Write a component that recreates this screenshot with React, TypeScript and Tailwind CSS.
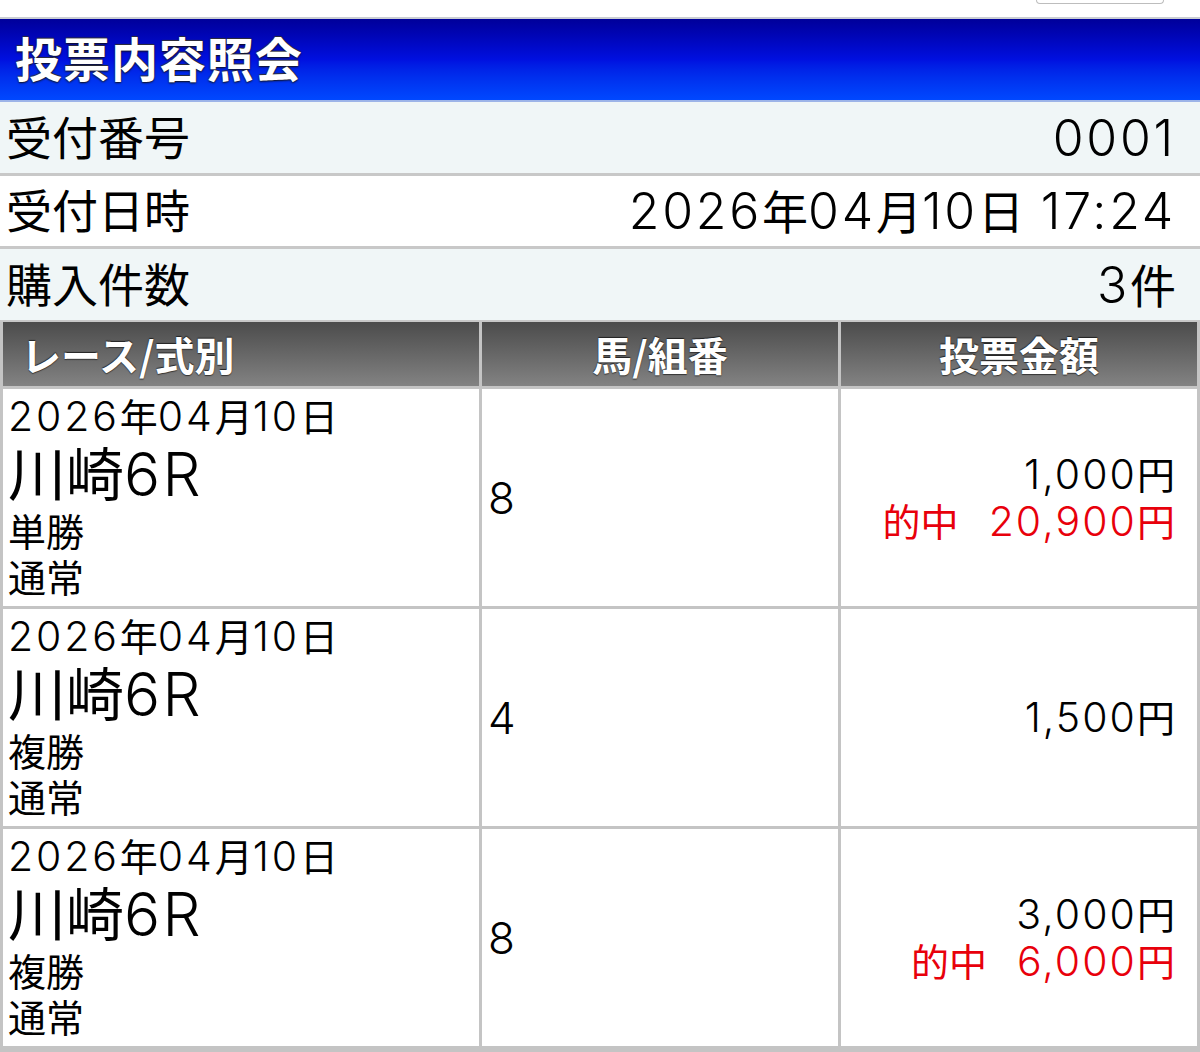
import React from "react";

const font = { fontFamily: 'Inter, "Noto Sans CJK JP", "Noto Sans", sans-serif' };

type Bet = {
  kind: string;
  num: string;
  amount: string;
  hit?: string;
};

const bets: Bet[] = [
  { kind: "単勝", num: "8", amount: "1,000円", hit: "20,900円" },
  { kind: "複勝", num: "4", amount: "1,500円" },
  { kind: "複勝", num: "8", amount: "3,000円", hit: "6,000円" },
];

function Mixed({ text, cjk }: { text: string; cjk: string }) {
  const parts = text.split(/([^\x00-\x7f]+)/).filter((p) => p.length > 0);
  return (
    <>
      {parts.map((p, i) =>
        /[^\x00-\x7f]/.test(p) ? (
          <span key={i} className={`${cjk} tracking-normal font-normal`}>
            {p}
          </span>
        ) : (
          <span key={i}>{p}</span>
        )
      )}
    </>
  );
}

function InfoRow({ label, value, bg, h, border }: { label: string; value: string; bg: string; h: string; border: string }) {
  return (
    <div className={`flex items-center justify-between ${h} ${border} border-[#c8c8c8] pl-[6px] pr-[24px] text-[46px] leading-none text-black ${bg}`}>
      <span>{label}</span>
      <span className="font-light text-[50px] tracking-[0.055em]">
        <Mixed text={value} cjk="text-[46px]" />
      </span>
    </div>
  );
}

export default function App() {
  return (
    <div className="w-[1200px] h-[1052px] overflow-hidden bg-white" style={font}>
      {/* top strip */}
      <div className="h-[17px] flex justify-end items-start">
        <div className="w-[128px] h-[4px] mr-[36px] rounded-b-[10px] border-[1.5px] border-t-0 border-[#bdbdbd]" />
      </div>
      <div className="h-[2px] bg-[#c9cdd3]" />
      <div className="h-[81px] flex items-center pl-[15px] bg-gradient-to-b from-[#00009a] via-[#0010e0] to-[#0048ff]">
        <span className="text-[47px] font-bold text-white leading-none tracking-[0.02em] [text-shadow:0_1px_2px_#111,0_-1px_1px_#333]">
          投票内容照会
        </span>
      </div>
      <div className="h-[2px] bg-[#9db4e8]" />
      <InfoRow label="受付番号" value="0001" bg="bg-[#f0f6f7]" h="h-[74px]" border="border-b-[3px]" />
      <InfoRow label="受付日時" value="2026年04月10日 17:24" bg="bg-white" h="h-[73px]" border="border-b-[3px]" />
      <InfoRow label="購入件数" value="3件" bg="bg-[#f0f6f7]" h="h-[73px]" border="border-b-[2px]" />

      {/* table */}
      <div className="grid grid-cols-[476px_356px_356px] gap-[3px] px-[3px] pb-[8px] bg-[#c4c4c4]">
        {["レース/式別", "馬/組番", "投票金額"].map((h, i) => (
          <div
            key={h}
            className={`h-[64px] flex items-center bg-gradient-to-b from-[#4c4c4c] to-[#838383] text-white font-bold text-[40px] leading-none [text-shadow:0_-1px_1px_#222,0_1px_1px_#333] ${
              i === 0 ? "pl-[18px]" : "justify-center"
            }`}
            style={{ fontFamily: '"Noto Sans CJK JP", sans-serif' }}
          >
            {h}
          </div>
        ))}
        {bets.map((b, idx) => (
          <React.Fragment key={idx}>
            <div className="h-[217px] bg-white pl-[5px] pt-[4px] text-black">
              <div className="text-[41px] leading-[46px] font-light tracking-[0.07em]">
                <Mixed text="2026年04月10日" cjk="text-[38px]" />
              </div>
              <div className="text-[58px] leading-[68px] font-light tracking-[0.04em]">
                <span className="font-normal tracking-normal">川崎</span>
                <span className="text-[60px]">6R</span>
              </div>
              <div className="text-[38px] leading-[46px]">{b.kind}</div>
              <div className="text-[38px] leading-[46px]">通常</div>
            </div>
            <div className="h-[217px] bg-white flex items-center pl-[6px] text-[44px] font-light text-black">
              {b.num}
            </div>
            <div className="h-[217px] bg-white flex flex-col justify-center items-end pr-[22px] text-[41px] leading-[46px] font-light tracking-[0.05em]">
              <div className="text-black">
                <Mixed text={b.amount} cjk="text-[38px]" />
              </div>
              {b.hit && (
                <div className="text-[#e8000b] flex items-baseline">
                  <span className="font-normal text-[38px] tracking-normal">的中</span>
                  <span className="ml-[30px]">
                    <Mixed text={b.hit} cjk="text-[38px]" />
                  </span>
                </div>
              )}
            </div>
          </React.Fragment>
        ))}
      </div>
    </div>
  );
}
